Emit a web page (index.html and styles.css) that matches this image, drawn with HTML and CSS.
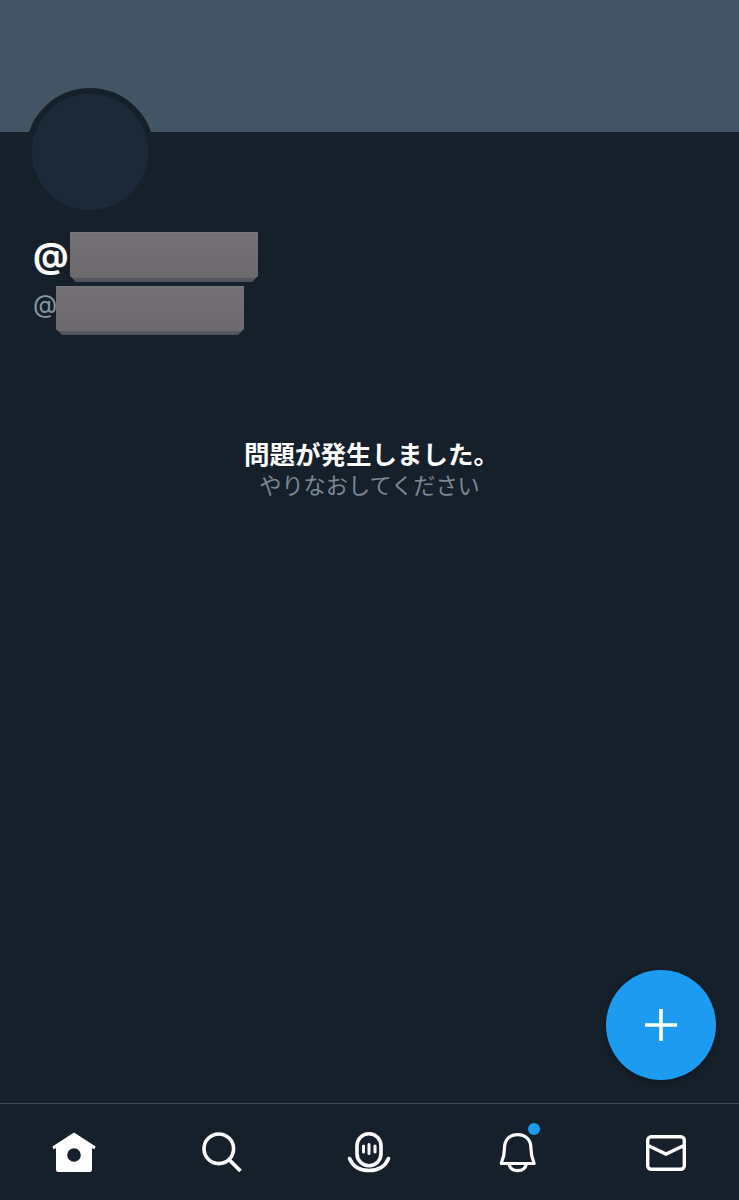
FILE: index.html
```html
<!DOCTYPE html>
<html lang="ja">
<head>
    <meta charset="UTF-8">
    <meta name="viewport" content="width=device-width, initial-scale=1.0">
    <title>プロフィール</title>
    <link rel="stylesheet" href="styles.css">
</head>
<body>
    <div class="page">
        <main class="profile">
            <div class="banner"></div>
            <div class="avatar"></div>

            <div class="name-row">
                <span class="name-at">@</span>
                <span class="redact"></span>
            </div>
            <div class="handle-row">
                <span class="handle-at">@</span>
                <span class="redact redact-small"></span>
            </div>

            <!-- Error message -->
            <div class="message">
                <div class="message-title">問題が発生しました。</div>
                <div class="message-retry">やりなおしてください</div>
            </div>

            <button class="fab" aria-label="新規作成">
                <svg width="32" height="32" viewBox="0 0 32 32">
                    <path d="M16 0V32M0 16H32" fill="none" stroke="#fff" stroke-width="3.6"/>
                </svg>
            </button>
        </main>

        <!-- Bottom tabs -->
        <nav class="tabs">
            <div class="tab">
                <svg class="icon" viewBox="0 0 48 48">
                    <path fill-rule="evenodd" fill="#fff" d="M24 4.5 45.6 18.6 44.6 21.2 42 20.2V41.5Q42 44 39.5 44H8.5Q6 44 6 41.5V20.2L3.4 21.2 2.4 18.6ZM24 20.2A6.8 6.8 0 1 0 24 33.8 6.8 6.8 0 1 0 24 20.2Z"/>
                </svg>
            </div>
            <div class="tab">
                <svg class="icon" viewBox="0 0 48 48">
                    <circle cx="20.8" cy="20.8" r="14.8" fill="none" stroke="#fff" stroke-width="3.6"/>
                    <path d="M31 31.5 42.5 43" fill="none" stroke="#fff" stroke-width="3.8"/>
                </svg>
            </div>
            <div class="tab">
                <svg class="icon" viewBox="0 0 48 48">
                    <rect x="12" y="5.8" width="24" height="32" rx="12" fill="none" stroke="#fff" stroke-width="3.6"/>
                    <path d="M4.5 30.5C8 39 15 42.5 24 42.5S40 39 43.5 30.5" fill="none" stroke="#fff" stroke-width="3.6" stroke-linecap="round"/>
                    <path d="M18.5 18V24M24 16.5V25.5M30 18V24" fill="none" stroke="#fff" stroke-width="3" stroke-linecap="round"/>
                </svg>
            </div>
            <div class="tab">
                <svg class="icon" viewBox="0 0 48 48">
                    <path d="M8.3 35.5C10.5 30 11.5 25.5 11.5 20 11.5 11.5 17 6.6 24.7 6.6S37.9 11.5 37.9 20C37.9 25.5 38.9 30 41.1 35.5Z" fill="none" stroke="#fff" stroke-width="3.2" stroke-linejoin="round"/>
                    <path d="M16 36C17 41 20.5 42.6 24.7 42.6S32.4 41 33.4 36" fill="none" stroke="#fff" stroke-width="3.2"/>
                </svg>
                <span class="tab-dot"></span>
            </div>
            <div class="tab">
                <svg class="icon" viewBox="0 0 48 48">
                    <rect x="6.7" y="8.7" width="36.6" height="32.6" rx="3.5" fill="none" stroke="#fff" stroke-width="3.4"/>
                    <path d="M7 17.5 25 26 43 17.5" fill="none" stroke="#fff" stroke-width="3.4"/>
                </svg>
            </div>
        </nav>
    </div>
</body>
</html>
```

FILE: styles.css
```css
body {
    margin: 0;
    background: #15202b;
    color: #fff;
    font-family: "Inter", "Noto Sans CJK JP", sans-serif;
}
.page {
    display: flex;
    flex-direction: column;
    height: 1200px;
}
.profile {
    position: relative;
    flex: 1;
}
.banner {
    height: 132px;
    background: #435465;
}
.avatar {
    box-sizing: border-box;
    width: 128px;
    height: 128px;
    margin: -44px 0 0 26px;
    border: 6px solid #15202b;
    border-radius: 50%;
    background: #1c2938;
}
.name-row, .handle-row {
    display: flex;
    align-items: flex-start;
    margin-left: 33px;
}
.name-row {
    margin-top: 16px;
}
.handle-row {
    margin-top: 4px;
}
.name-at {
    width: 37px;
    font-size: 35px;
    font-weight: 700;
    line-height: 47px;
}
.handle-at {
    width: 23px;
    font-size: 25px;
    line-height: 37px;
    color: #8a97a3;
}
.redact {
    width: 188px;
    height: 50px;
    background: linear-gradient(#7d7b80 0, #737174 3%, #6c6a6c 91%, #55565f 92%, #50525e 100%);
    clip-path: polygon(0 0, 100% 0, 100% calc(100% - 6px), calc(100% - 6px) 100%, 6px 100%, 0 calc(100% - 6px));
}
.redact-small {
    height: 49px;
}
.message {
    margin-top: 102px;
    text-align: center;
    font-family: "Noto Sans CJK JP", sans-serif;
}
.message-title {
    padding-left: 4px;
    font-size: 25.5px;
    font-weight: 700;
    line-height: 32px;
}
.message-retry {
    font-size: 22.2px;
    line-height: 30px;
    color: #7b8894;
}
.fab {
    position: absolute;
    right: 23px;
    bottom: 23px;
    display: flex;
    align-items: center;
    justify-content: center;
    width: 110px;
    height: 110px;
    padding: 0;
    border: none;
    border-radius: 50%;
    background: #1d9bf0;
    box-shadow: 0 2px 6px rgba(0, 0, 0, 0.3);
}
.tabs {
    display: grid;
    grid-template-columns: repeat(5, 1fr);
    height: 96px;
    border-top: 1px solid #3f4b58;
}
.tab {
    position: relative;
    display: flex;
    align-items: center;
    justify-content: center;
}
.icon {
    width: 48px;
    height: 48px;
}
.tab-dot {
    position: absolute;
    left: 85px;
    top: 19px;
    width: 12px;
    height: 12px;
    border-radius: 50%;
    background: #1d9bf0;
}
```
